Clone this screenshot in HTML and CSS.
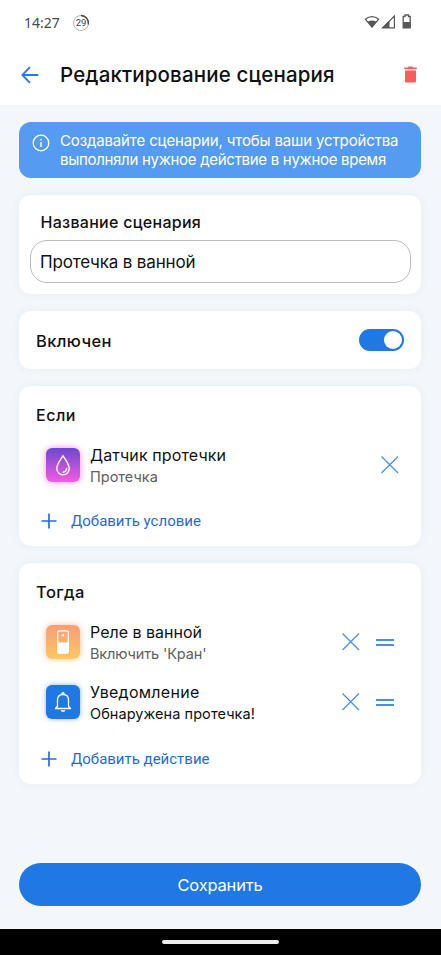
FILE: index.html
```html
<!DOCTYPE html>
<html lang="ru">
<head>
<meta charset="utf-8">
<meta name="viewport" content="width=device-width, initial-scale=1">
<title>Редактирование сценария</title>
<link rel="stylesheet" href="styles.css">
</head>
<body>
<div class="status">
  <span class="clock">14:27</span>
  <span class="counter"><svg width="18" height="18" viewBox="0 0 18 18" fill="none"><circle cx="9" cy="9" r="7.5" stroke="#aaa" stroke-width=".9"/><path d="M9 1.5A7.5 7.5 0 0 1 16.3 10.5" stroke="#444" stroke-width="1.3"/></svg><b>29</b></span>
  <svg class="signals" width="50" height="18" viewBox="0 0 50 18">
    <path d="M1.300 5.200Q8 .2 14.700 5.200L8 13.200Z" fill="none" stroke="#58585a" stroke-width="1.300" stroke-linejoin="round"/>
    <path d="M3.500 7.800Q8 5.200 12.500 7.800L8 13.500Z" fill="#58585a"/>
    <path d="M18.500 13.900L30.400 2V13.900Z" fill="#fff" stroke="#58585a" stroke-width="1.200"/>
    <path d="M18 14L25.500 6.500V14Z" fill="#58585a"/>
    <path d="M41 2.500V1H44.500V2.500H46.200V13.800H39.200V2.500Z" fill="#fff" stroke="#58585a" stroke-width="1.300"/>
    <path d="M39 8H46.500V14H39Z" fill="#58585a"/>
  </svg>
</div>
<header class="header">
  <svg class="back" width="18" height="18" viewBox="0 0 18 18" fill="none" stroke="#2878e5" stroke-width="1.800"><path d="M17.300 9H1.500M9 1.200L1.300 9L9 16.800"/></svg>
  <h1 class="title">Редактирование сценария</h1>
  <svg class="trash" width="14" height="17" viewBox="0 0 14 17" fill="#f65e5e"><path d="M1 4.500H12V15.200Q12 16.500 10.700 16.500H2.300Q1 16.500 1 15.200ZM.2 1.500H3.600L4.500 .5H8.500L9.400 1.500H12.800V3.200H.2Z"/></svg>
</header>
<main class="content">
  <section class="banner">
    <svg width="18" height="18" viewBox="0 0 18 18" fill="none" stroke="#fff" stroke-width="1.300"><circle cx="9" cy="9" r="7.800"/><path d="M9 7.900V13M9 4.900V6.400" stroke-width="1.400"/></svg>
    <p><span class="banner-line1">Создавайте сценарии, чтобы ваши устройства</span><br><span class="banner-line2">выполняли нужное действие в нужное время</span></p>
  </section>
  <section class="card name-card">
    <div class="label">Название сценария</div>
    <div class="field">Протечка в ванной</div>
  </section>
  <section class="card toggle-card">
    <span class="heading enabled">Включен</span>
    <span class="switch"><i></i></span>
  </section>
  <section class="card condition-card">
    <div class="heading if">Если</div>
    <div class="row">
      <span class="tile leak"><svg width="34" height="34" viewBox="0 0 34 34" fill="none" stroke="#fff" stroke-width="1.400" stroke-linecap="round"><path d="M17 7.800C14.500 11.500 10.800 16.200 10.800 20.300C10.800 24.200 13.600 26.700 17 26.700S23.200 24.200 23.200 20.300C23.200 16.200 19.500 11.500 17 7.800Z"/><path d="M20.700 20.500C20.500 22.300 19.200 23.900 17.300 24.200"/></svg></span>
      <div class="texts"><div class="name n-leak">Датчик протечки</div><div class="detail">Протечка</div></div>
      <svg class="close" width="18" height="18" viewBox="0 0 18 18"><path d="M.5 .5L17 17M17 .5L.5 17"/></svg>
    </div>
    <div class="add"><svg width="16" height="16" viewBox="0 0 16 16"><path d="M8 .5V15.500M.5 8H15.500"/></svg><span>Добавить условие</span></div>
  </section>
  <section class="card action-card">
    <div class="heading then">Тогда</div>
    <div class="row">
      <span class="tile relay"><svg width="34" height="34" viewBox="0 0 34 34"><rect x="11.700" y="5.900" width="10.600" height="22.300" rx="2" fill="none" stroke="#fff" stroke-width="1.300"/><path d="M11.500 17.500H22.500V26.500Q22.500 28.500 20.500 28.500H13.500Q11.500 28.500 11.500 26.500Z" fill="#fff"/><circle cx="17" cy="10.300" r="1.200" fill="#fff"/></svg></span>
      <div class="texts"><div class="name n-relay">Реле в ванной</div><div class="detail d-relay">Включить 'Кран'</div></div>
      <svg class="close" width="18" height="18" viewBox="0 0 18 18"><path d="M.5 .5L17 17M17 .5L.5 17"/></svg>
      <span class="grip"></span>
    </div>
    <div class="row">
      <span class="tile notify"><svg width="34" height="34" viewBox="0 0 34 34" fill="none" stroke="#fff" stroke-width="1.300" stroke-linejoin="round"><path d="M9.500 23.500L11.500 21.300V15C11.500 11.700 13.700 9.500 17 9.500S22.500 11.700 22.500 15V21.300L24.500 23.500Z"/><path d="M15.800 9.300Q15.800 7.700 17 7.700T18.200 9.300"/><path d="M14.500 25.300H19.500Q19 27 17 27T14.500 25.300Z" fill="#fff" stroke="none"/></svg></span>
      <div class="texts"><div class="name n-notify">Уведомление</div><div class="detail d-notify">Обнаружена протечка!</div></div>
      <svg class="close" width="18" height="18" viewBox="0 0 18 18"><path d="M.5 .5L17 17M17 .5L.5 17"/></svg>
      <span class="grip"></span>
    </div>
    <div class="add"><svg width="16" height="16" viewBox="0 0 16 16"><path d="M8 .5V15.500M.5 8H15.500"/></svg><span>Добавить действие</span></div>
  </section>
  <div class="save"><span>Сохранить</span></div>
</main>
<div class="navbar"><i></i></div>
</body>
</html>
```
FILE: styles.css
```css
* { box-sizing: border-box; }
body { margin: 0; height: 955px; display: flex; flex-direction: column; overflow: hidden; background: #f3f7fb; color: #111; font-family: Inter, sans-serif; white-space: nowrap; }
svg { display: block; flex: none; }
.status { height: 44px; background: #fff; display: flex; align-items: center; padding: 2px 27px 0 24px; }
.clock { font: 14px/18px "Noto Sans", sans-serif; color: #4a4a4c; width: 48px; }
.counter { display: grid; place-items: center; width: 18px; height: 18px; }
.counter > * { grid-area: 1 / 1; }
.counter b { font: 400 9.5px/18px Roboto, sans-serif; color: #444; }
.signals { margin-left: auto; }
.header { height: 61px; background: #fff; display: flex; align-items: center; padding: 0 23px 0 21px; }
.title { margin: 1px 0 0 21px; font-size: 20.5px; font-weight: 500; line-height: 28px; letter-spacing: .15px; }
.trash { margin-left: auto; }
.content { height: 824px; padding: 17px 20px 0 19px; display: flex; flex-direction: column; }
.banner { height: 56px; flex: none; border-radius: 12px; background: #549bf1; color: #fff; display: flex; padding: 10px 13px; gap: 10px; margin-bottom: 17px; }
.banner svg { margin-top: 2px; }
.banner p { margin: 0; font-size: 15px; line-height: 18.5px; }
.banner-line1 { letter-spacing: -.14px; }
.banner-line2 { letter-spacing: -.29px; }
.card { flex: none; border-radius: 12px; background: #fff; box-shadow: 0 0 8px rgba(50, 80, 120, .07); margin-bottom: 17px; }
.name-card { height: 99px; padding: 16px 10px 0 11px; }
.label { font-size: 16px; font-weight: 500; line-height: 22px; padding-left: 10.5px; letter-spacing: .28px; }
.field { margin-top: 7px; height: 43px; border: 1px solid #bbb; border-radius: 17px; padding-left: 9px; font-size: 17px; line-height: 43px; letter-spacing: -.17px; }
.toggle-card { height: 58px; display: flex; align-items: center; justify-content: space-between; padding: 0 17px; }
.heading { font-size: 16px; font-weight: 500; line-height: 22px; }
.enabled { font-size: 16.5px; letter-spacing: .4px; padding-top: 1px; }
.if { letter-spacing: .5px; }
.then { font-size: 16.5px; letter-spacing: .4px; }
.switch { width: 45px; height: 22px; border-radius: 11px; background: #2078e5; display: flex; justify-content: flex-end; align-items: center; padding-right: 2px; }
.switch i { width: 18px; height: 18px; border-radius: 50%; background: #fff; }
.condition-card { height: 160px; padding: 18px 22px 0 17px; }
.action-card { height: 221px; padding: 18px 27px 0 17px; }
.heading + .row { margin-top: 9px; }
.row { height: 60px; display: flex; align-items: center; padding-left: 10px; }
.tile { width: 34px; height: 34px; border-radius: 6px; flex: none; }
.leak { background: linear-gradient(#6b48cf, #f45be2); box-shadow: 0 0 7px rgba(244, 91, 226, .7); }
.relay { background: linear-gradient(#fc9c78, #fdc95f); box-shadow: 0 0 6px rgba(253, 160, 110, .65); }
.notify { background: #2078e5; box-shadow: 0 0 5px rgba(32, 120, 229, .55); }
.texts { margin: 2px 0 0 10px; flex: 1; }
.name { font-size: 16px; line-height: 21px; }
.n-leak { letter-spacing: .13px; }
.n-notify { letter-spacing: .27px; }
.detail { font-size: 14.5px; line-height: 21px; color: #606060; }
.d-relay { letter-spacing: -.13px; }
.d-notify { color: #111; letter-spacing: .07px; }
.close { stroke: #4a90e2; stroke-width: 1.3; fill: none; }
.grip { width: 18px; height: 7px; margin-left: 16px; border: solid #4a90e2; border-width: 2px 0; }
.add { height: 32px; padding-left: 5px; display: flex; align-items: center; gap: 14px; color: #1f6ad8; font: 15px/22px Roboto, sans-serif; }
.condition-card .add { margin-top: 10px; }
.action-card .add { margin-top: 11px; }
.add svg { stroke: #2868ee; stroke-width: 1.7; }
.save { height: 43px; flex: none; margin-top: 62px; border-radius: 22px; background: #2078e5; color: #fff; font-size: 16.5px; line-height: 44px; letter-spacing: -.2px; text-align: center; }
.navbar { height: 26px; background: #000; display: flex; justify-content: center; align-items: center; }
.navbar i { width: 117px; height: 4px; border-radius: 2px; background: #eee; }
```
